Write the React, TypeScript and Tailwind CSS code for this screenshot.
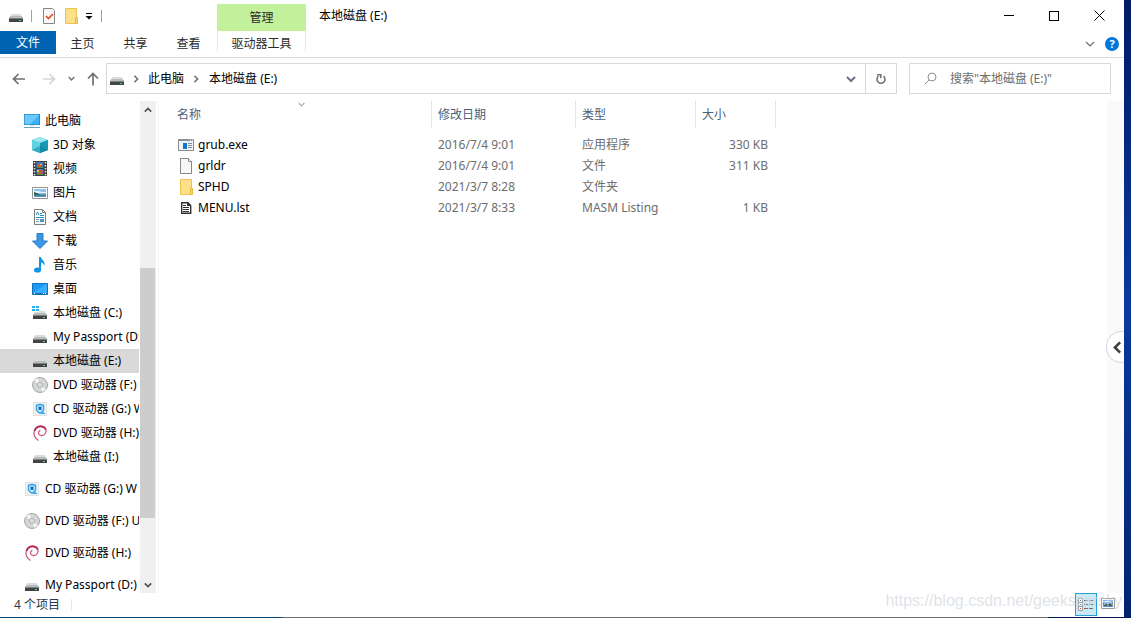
import { useState } from 'react'
import type { ReactNode } from 'react'

type IconName =
  | 'pc' | 'cube' | 'video' | 'picture' | 'doc' | 'download' | 'music' | 'desktop'
  | 'sysdrive' | 'drive' | 'disc' | 'cd' | 'debian' | 'exe' | 'file' | 'folder' | 'list'

// Shared by the plain drive and the system drive
const driveBody = (
  <>
    <path d="M3.500 6h9l2.500 4H1z" fill="#d9dbdc" />
    <path d="M2.500 8h11L15 10H1z" fill="#b9bcbe" />
    <path d="M1 10h14v1H1z" fill="#7b7f82" />
    <path d="M1 11h14v3H1z" fill="#414547" />
    <path d="M11 12h2v1h-2z" fill="#3ee53e" />
  </>
)

const icons: Record<IconName, ReactNode> = {
  pc: (
    <>
      <path d="M0 1h16v11H0z" fill="#1f7fc0" />
      <path d="M.7 1.700h14.600v9.600H.7z" fill="#3db1f5" />
      <path d="M.7 1.700h14.600L6 11.300H.7z" fill="#6cc9fb" />
      <path d="M6 12h4v1.500H6z" fill="#d5e2ea" />
      <path d="M0 14.500h16" stroke="#6fa0bf" />
    </>
  ),
  cube: (
    <>
      <path d="M0 3l8-3 8 3v10l-8 3-8-3z" fill="#31bcd2" />
      <path d="M0 3l8-3 8 3-8 3z" fill="#9ee6ef" />
      <path d="M0 3l8 3v10l-8-3z" fill="#5dd3e2" />
      <path d="M8 6l8-3v10l-8 3z" fill="#1798b4" />
      <path d="M8 9l8 4-8 3-8-3z" fill="#0f7f9c" opacity=".5" />
    </>
  ),
  video: (
    <>
      <path d="M1 0h14v15H1z" fill="#3b3b3b" />
      <path d="M2.500 1v14M13.500 1v14" stroke="#e8e8e8" strokeWidth="1.500" strokeDasharray="1.500 1.500" />
      <path d="M4.500 1h7v6h-7zM4.500 8h7v6h-7z" fill="#4778c4" />
      <path d="M5 5l3-3 2 2-1 2H5zM6 13l2-4 3 1-1 3z" fill="#d3582e" />
      <path d="M8 3h2v1H8zM5 9h2v2H5z" fill="#e9c83b" />
      <path d="M5 6h6v1H5zM5 13h6v1H5z" fill="#3f9441" />
    </>
  ),
  picture: (
    <>
      <path d="M.5 2.500h15v11H.5z" fill="#fff" stroke="#949494" />
      <path d="M2 4h12v8H2z" fill="#8cc3ee" />
      <path d="M2 6h5l3 1h4v1H2z" fill="#e3f1fb" />
      <path d="M2 7l3 1 3 1.500h6V11H2z" fill="#2d6a62" />
      <path d="M2 10.500h12V12H2z" fill="#5e97c6" />
    </>
  ),
  doc: (
    <>
      <path d="M2.500.5h8l3 3v12h-11z" fill="#fff" stroke="#7d7d7d" />
      <path d="M10.500.5v3h3" fill="none" stroke="#7d7d7d" />
      <path d="M4 6l1.500-3L7 6M8 4.500h2M8 6.500h4M4 8.500h8" fill="none" stroke="#1e8fd8" />
      <path d="M4 10.500h3M4 12.500h3" stroke="#8fa3b3" />
      <path d="M8 10h4v3H8z" fill="#4f93c4" />
    </>
  ),
  download: <path d="M5 .5h6V8h4.500L8 15.500.5 8H5z" fill="#3c97e3" stroke="#2a7ccb" />,
  music: (
    <>
      <path d="M7 0h2c.2 2.500 4.500 4 3.500 9-.5-2-1.500-3-3.500-3.500V13H7z" fill="#0f95e8" />
      <ellipse cx="5.500" cy="13" rx="3.500" ry="2.600" fill="#0f95e8" />
    </>
  ),
  desktop: (
    <>
      <path d="M.5 2.500h15v11H.5z" fill="#1a9bf5" stroke="#1272b8" />
      <path d="M1 12L14 3h1v9z" fill="#38aefc" />
      <path d="M1 12.500h14" stroke="#1272b8" />
      <path d="M2 12.500h1M11 12.500h1M13 12.500h1" stroke="#fff" />
    </>
  ),
  sysdrive: (
    <>
      {driveBody}
      <path d="M0 1h7v6H0z" fill="#fff" />
      <path d="M0 1h3v2H0zM4 1h3v2H4zM0 4h3v2H0zM4 4h3v2H4z" fill="#1fb1ee" />
    </>
  ),
  drive: driveBody,
  disc: (
    <>
      <circle cx="8" cy="8" r="7.500" fill="#d3d5d6" stroke="#a3a5a6" />
      <path d="M8 8L2 3.500A7 7 0 0 1 6 1.300zM8 8l6 4.500a7 7 0 0 1-4 2.200z" fill="#f2f3f3" />
      <circle cx="8" cy="8" r="2.500" fill="#e9eaea" stroke="#a9abac" />
      <circle cx="8" cy="8" r="1" fill="#fff" stroke="#b5b5b5" strokeWidth=".5" />
    </>
  ),
  cd: (
    <>
      <path d="M1.500 1.500h13v13h-13z" fill="#f0f0f0" stroke="#e4e4e4" />
      <path d="M4.500 4.500Q8 2.500 11.500 4.500V9Q10.500 11 8 12 5.500 11 4.500 9z" fill="#d8effc" stroke="#2ca3ee" strokeWidth="1.500" />
      <path d="M6.500 5.500h3v3.500h-3z" fill="#1b6fb8" />
      <path d="M9 12.500h4M11 10v3" stroke="#2ca3ee" strokeWidth="1.200" />
    </>
  ),
  debian: (
    <>
      <path
        d="M6.500 15.500C3.500 13.500 1.700 10.500 2 7.500 2.400 3.500 5.500 1.200 8.800 1.200c3.200 0 5.500 2.300 5.200 5.100-.3 2.600-2.300 4.200-4.500 4.200-2 0-3.200-1.300-3-2.900.1-1.200.9-2 1.900-2.300"
        fill="none" stroke="#c75b80" strokeWidth="1.300"
      />
      <path d="M2.500 6C3.500 3 6 1.300 8.800 1.300c2.400 0 4.300 1.300 5 3.200" fill="none" stroke="#b3224f" strokeWidth="1.800" />
    </>
  ),
  exe: (
    <>
      <path d="M.5 2.500h15v11H.5z" fill="#f1f3f4" stroke="#8c8c8c" />
      <path d="M0 2h16v2H0z" fill="#8c9296" />
      <path d="M12 3h1M14 3h1" stroke="#fff" />
      <path d="M5 6h4v6H5z" fill="#0a78d7" />
      <path d="M10 6.500h4M10 8.500h4M10 10.500h4" stroke="#8c8c8c" />
    </>
  ),
  file: (
    <>
      <path d="M2.500.5h8l3 3v12h-11z" fill="#f7f7f7" stroke="#868686" />
      <path d="M10.500.5v3h3" fill="#fff" stroke="#868686" />
    </>
  ),
  folder: (
    <>
      <path d="M2.500.5h11v15h-11z" fill="#ffe08a" stroke="#eec44f" />
      <path d="M12.500 9.500h2v6h-2z" fill="#ffdc70" stroke="#e6b93e" />
    </>
  ),
  list: (
    <>
      <path d="M3.700 2.700h6l3 3v7.600h-9z" fill="#fff" stroke="#303030" strokeWidth="1.400" />
      <path d="M9 2h1l3 3v1H9z" fill="#303030" />
      <path d="M5 5.500h3M5 7.500h6M5 9.500h6M5 11.500h6" stroke="#303030" />
    </>
  ),
}

function Icon({ name }: { name: IconName }) {
  return (
    <svg className="h-4 w-4 shrink-0" viewBox="0 0 16 16" aria-hidden="true">
      {icons[name]}
    </svg>
  )
}

interface ChevronProps {
  dir: 'up' | 'down' | 'left' | 'right'
  className?: string
  thin?: boolean
}

const chevronPaths = {
  up: 'M1 7l4-4 4 4',
  down: 'M1 3l4 4 4-4',
  left: 'M7 1L3 5l4 4',
  right: 'M3 1l4 4-4 4',
}

function Chevron({ dir, className = 'h-2 w-2', thin = false }: ChevronProps) {
  return (
    <svg className={className} viewBox="0 0 10 10" fill="none" stroke="currentColor" strokeWidth={thin ? 1.2 : 2} aria-hidden="true">
      <path d={chevronPaths[dir]} />
    </svg>
  )
}

interface TreeItem {
  id: string
  label: string
  icon: IconName
  root?: boolean
}

const tree: TreeItem[] = [
  { id: '3d', label: '3D 对象', icon: 'cube' },
  { id: 'video', label: '视频', icon: 'video' },
  { id: 'pictures', label: '图片', icon: 'picture' },
  { id: 'docs', label: '文档', icon: 'doc' },
  { id: 'downloads', label: '下载', icon: 'download' },
  { id: 'music', label: '音乐', icon: 'music' },
  { id: 'desktop', label: '桌面', icon: 'desktop' },
  { id: 'c', label: '本地磁盘 (C:)', icon: 'sysdrive' },
  { id: 'd', label: 'My Passport (D:)', icon: 'drive' },
  { id: 'e', label: '本地磁盘 (E:)', icon: 'drive' },
  { id: 'f', label: 'DVD 驱动器 (F:)', icon: 'disc' },
  { id: 'g', label: 'CD 驱动器 (G:) W', icon: 'cd' },
  { id: 'h', label: 'DVD 驱动器 (H:)', icon: 'debian' },
  { id: 'i', label: '本地磁盘 (I:)', icon: 'drive' },
  { id: 'root-g', label: 'CD 驱动器 (G:) W', icon: 'cd', root: true },
  { id: 'root-f', label: 'DVD 驱动器 (F:) U', icon: 'disc', root: true },
  { id: 'root-h', label: 'DVD 驱动器 (H:)', icon: 'debian', root: true },
  { id: 'root-d', label: 'My Passport (D:)', icon: 'drive', root: true },
]

const files: { name: string; date: string; type: string; size: string; icon: IconName }[] = [
  { name: 'grub.exe', date: '2016/7/4 9:01', type: '应用程序', size: '330 KB', icon: 'exe' },
  { name: 'grldr', date: '2016/7/4 9:01', type: '文件', size: '311 KB', icon: 'file' },
  { name: 'SPHD', date: '2021/3/7 8:28', type: '文件夹', size: '', icon: 'folder' },
  { name: 'MENU.lst', date: '2021/3/7 8:33', type: 'MASM Listing', size: '1 KB', icon: 'list' },
]

function TitleBar() {
  return (
    <header className="flex h-[31px] shrink-0">
      <div className="flex w-[217px] items-center pl-2">
        <Icon name="drive" />
        <span className="ml-[7px] h-3 w-px bg-gray-400" />
        <button type="button" aria-label="属性" className="ml-[9px]">
          <svg className="h-4 w-4" viewBox="0 0 16 16" aria-hidden="true">
            <path d="M2.500.5h9l2 2v13h-11z" fill="#f8f8f8" stroke="#868686" />
            <path d="M5 8l2.500 2.500L12 6" fill="none" stroke="#e8501e" strokeWidth="1.700" />
          </svg>
        </button>
        <button type="button" aria-label="新建文件夹" className="ml-[6px]">
          <Icon name="folder" />
        </button>
        <button type="button" aria-label="自定义快速访问工具栏" className="ml-[6px]">
          <svg className="h-2 w-2" viewBox="0 0 8 8" aria-hidden="true">
            <path d="M1 1.500h6" stroke="#000" />
            <path d="M.5 4h7L4 7.500z" fill="#000" />
          </svg>
        </button>
        <span className="ml-2 h-3 w-px bg-gray-400" />
      </div>
      <div className="flex h-[27px] w-[89px] items-center justify-center self-end bg-[#c3f09b]">管理</div>
      <h1 className="flex-1 self-center pl-[13px] text-black">本地磁盘 (E:)</h1>
      <div className="flex pr-px text-black">
        <button type="button" aria-label="最小化" className="flex w-[45px] items-center justify-center">
          <span className="h-px w-[10px] bg-black" />
        </button>
        <button type="button" aria-label="最大化" className="flex w-[45px] items-center justify-center">
          <span className="h-[10px] w-[10px] border border-black" />
        </button>
        <button type="button" aria-label="关闭" className="flex w-[47px] items-center justify-center">
          <svg className="h-[11px] w-[11px]" viewBox="0 0 11 11" stroke="#000" aria-hidden="true">
            <path d="M.5.5l10 10M10.500.5l-10 10" />
          </svg>
        </button>
      </div>
    </header>
  )
}

function Ribbon() {
  return (
    <nav className="flex h-[27px] shrink-0 border-b border-[#dadbdc]">
      <button type="button" className="h-[23px] w-14 bg-[#0063b1] text-white">文件</button>
      {['主页', '共享', '查看'].map((tab) => (
        <button key={tab} type="button" className="h-[26px] w-[53px]">{tab}</button>
      ))}
      <div className="ml-[2px] h-5 border-x border-gray-200">
        <button type="button" className="h-[26px] w-[87px]">驱动器工具</button>
      </div>
      <div className="flex flex-1 items-center justify-end gap-[10px] pr-[5px]">
        <button type="button" aria-label="展开功能区" className="text-gray-500">
          <Chevron dir="down" thin className="h-[10px] w-[10px]" />
        </button>
        <button type="button" aria-label="帮助" className="h-[14px] w-[14px] rounded-full bg-[#0078d7] text-[11px] leading-[14px] font-bold text-white">
          ?
        </button>
      </div>
    </nav>
  )
}

function AddressBar() {
  return (
    <div className="flex shrink-0 items-center pt-[5px] pr-[13px] pb-[7px]">
      <div className="flex w-[106px] items-center pl-3 text-[#707070]">
        <button type="button" aria-label="后退">
          <svg className="h-[14px] w-[14px]" viewBox="0 0 14 14" fill="none" stroke="currentColor" strokeWidth="1.700" aria-hidden="true">
            <path d="M13 7H1.500M6.500 2l-5 5 5 5" />
          </svg>
        </button>
        <button type="button" aria-label="前进" className="ml-4 text-gray-300">
          <svg className="h-[14px] w-[14px]" viewBox="0 0 14 14" fill="none" stroke="currentColor" strokeWidth="1.700" aria-hidden="true">
            <path d="M1 7h11.500M7.500 2l5 5-5 5" />
          </svg>
        </button>
        <button type="button" aria-label="最近浏览的位置" className="ml-3">
          <Chevron dir="down" className="h-[7px] w-[7px]" />
        </button>
        <button type="button" aria-label="上移" className="ml-[11px]">
          <svg className="h-[14px] w-[14px]" viewBox="0 0 14 14" fill="none" stroke="currentColor" strokeWidth="1.700" aria-hidden="true">
            <path d="M7 13.500V1.500M2 6.500l5-5 5 5" />
          </svg>
        </button>
      </div>
      <div className="flex h-[31px] flex-1 items-center border border-[#d9d9d9] text-black">
        <span className="ml-[2px]">
          <Icon name="drive" />
        </span>
        <span className="ml-[7px] text-gray-500"><Chevron dir="right" /></span>
        <button type="button" className="ml-2">此电脑</button>
        <span className="ml-2 text-gray-500"><Chevron dir="right" /></span>
        <button type="button" className="ml-[9px]">本地磁盘 (E:)</button>
        <button type="button" aria-label="以前的位置" className="ml-auto flex h-full w-[29px] items-center justify-center text-gray-500">
          <Chevron dir="down" className="h-[10px] w-[10px]" />
        </button>
        <button type="button" aria-label="刷新" className="flex h-full w-[31px] items-center justify-center border-l border-[#d9d9d9] text-[#707070]">
          <svg className="h-3 w-3" viewBox="0 0 12 12" fill="none" stroke="currentColor" strokeWidth="1.500" aria-hidden="true">
            <path d="M3.500 3.200A4 4 0 1 0 8.500 3.200" />
            <path d="M2 1.700h3.800v3.600" />
          </svg>
        </button>
      </div>
      <label className="ml-3 flex h-[31px] w-[202px] items-center border border-[#d9d9d9] pl-[14px]">
        <svg className="h-[13px] w-[13px] shrink-0" viewBox="0 0 13 13" fill="none" stroke="#8a9097" aria-hidden="true">
          <circle cx="8" cy="5" r="4" />
          <path d="M5 8L.7 12.300" />
        </svg>
        <input
          type="search"
          aria-label="搜索"
          placeholder={'搜索"本地磁盘 (E:)"'}
          className="ml-[13px] w-full min-w-0 bg-transparent outline-none placeholder:text-[#6d6d6d]"
        />
      </label>
    </div>
  )
}

function Sidebar() {
  const [selected, setSelected] = useState('e')

  return (
    <aside className="flex w-[156px] shrink-0 text-black">
      <ul className="mr-px min-w-0 flex-1 overflow-hidden pt-2">
        <li>
          <button type="button" className="flex h-6 w-full items-center gap-[5px] pl-6">
            <Icon name="pc" />
            此电脑
          </button>
        </li>
        {tree.map((item) => (
          <li key={item.id} className={item.root ? 'mt-2' : ''}>
            <button
              type="button"
              onClick={() => setSelected(item.id)}
              className={`flex h-6 w-full items-center gap-[5px] overflow-hidden whitespace-nowrap ${
                item.root ? 'pl-6' : 'pl-8'
              } ${selected === item.id ? 'bg-[#d9d9d9]' : ''}`}
            >
              <Icon name={item.icon} />
              {item.label}
            </button>
          </li>
        ))}
      </ul>
      <div className="flex w-4 flex-col bg-[#f0f0f0] text-[#505050]">
        <button type="button" aria-label="向上滚动" className="flex h-[17px] items-center justify-center">
          <Chevron dir="up" />
        </button>
        <div className="flex-[150]" />
        <div className="mr-px flex-[250] bg-[#cdcdcd]" />
        <div className="flex-[58]" />
        <button type="button" aria-label="向下滚动" className="flex h-[17px] items-center justify-center">
          <Chevron dir="down" />
        </button>
      </div>
    </aside>
  )
}

function FileTable() {
  return (
    <table className="w-[605px] table-fixed self-start text-left text-[#6d6d6d]">
      <colgroup>
        <col className="w-[261px]" />
        <col className="w-[144px]" />
        <col className="w-[120px]" />
        <col className="w-[80px]" />
      </colgroup>
      <thead className="text-[#4c607a]">
        <tr>
          {['名称', '修改日期', '类型', '大小'].map((title, i) => (
            <th key={title} className="relative p-0 pb-[6px] font-normal">
              {i === 0 && (
                <span className="absolute inset-x-0 top-0 flex justify-center text-gray-600">
                  <Chevron dir="down" thin className="h-[7px] w-[7px]" />
                </span>
              )}
              <div className="flex h-[27px] items-center border-r border-[#e5e5e5] pl-[6px]">{title}</div>
            </th>
          ))}
        </tr>
      </thead>
      <tbody>
        {files.map((file) => (
          <tr key={file.name} className="h-[21px]">
            <td className="p-0">
              <div className="flex items-center gap-1 pl-[7px] text-black">
                <Icon name={file.icon} />
                {file.name}
              </div>
            </td>
            <td className="p-0 pl-[6px]">{file.date}</td>
            <td className="p-0 pl-[6px]">{file.type}</td>
            <td className="p-0 pr-2 text-right">{file.size}</td>
          </tr>
        ))}
      </tbody>
    </table>
  )
}

function StatusBar() {
  return (
    <footer className="relative flex h-6 shrink-0 items-center pr-[9px] pl-[14px] text-[#26374f]">
      <span>4 个项目</span>
      <span className="ml-[11px] h-3 w-px bg-gray-200" />
      <div className="ml-auto flex h-full items-start gap-1">
        <button type="button" aria-label="详细信息" className="flex h-[23px] w-[22px] items-center justify-center border border-[#26a0da] bg-[#cbe8f6]">
          <svg className="h-4 w-4" viewBox="0 0 16 16" fill="none" aria-hidden="true">
            <path d="M.5 1.500h4v4h-4zM.5 5.500h4v4h-4zM.5 9.500h4v4h-4z" fill="#fff" stroke="#9a9a9a" />
            <path d="M2 3h1v1H2z" fill="#3a78c3" />
            <path d="M2 7h1v1H2z" fill="#3a78c3" />
            <path d="M2 11h1v1H2z" fill="#d33" />
            <path d="M6 3.500h10M6 7.500h10M6 11.500h10" stroke="#707070" strokeDasharray="4 1" />
          </svg>
        </button>
        <button type="button" aria-label="大缩略图" className="flex h-[21px] items-center">
          <svg className="h-[14px] w-[14px]" viewBox="0 0 14 14" aria-hidden="true">
            <path d="M.5 1.500h13v10H.5z" fill="#fff" stroke="#9a9a9a" />
            <path d="M2 3h10v7H2z" fill="#7db7ee" />
            <path d="M4 4h4v1H4z" fill="#fff" />
            <path d="M2 6l4 1 6-1v3H2z" fill="#2f5f5a" />
            <path d="M2 9h10v1H2z" fill="#5a90c8" />
          </svg>
        </button>
      </div>
      <span className="pointer-events-none absolute right-[2px] bottom-1 font-['Liberation_Sans'] text-base text-gray-300/70">
        https://blog.csdn.net/geekscarsky
      </span>
    </footer>
  )
}

export default function App() {
  return (
    <div className="flex h-screen flex-col bg-[#0a2f8f] font-['Noto_Sans','Noto_Sans_CJK_SC',sans-serif] text-[12px] leading-4 text-[#2b2b2b]">
      <div className="flex min-h-0 flex-1 bg-linear-to-b from-[#021b66] via-[#0a3a9e] to-[#03246f] pr-[7px]">
        <div className="flex min-w-0 flex-1 flex-col overflow-hidden bg-white">
          <TitleBar />
          <Ribbon />
          <AddressBar />
          <main className="relative flex min-h-0 flex-1">
            <Sidebar />
            <div className="ml-[2px] flex min-w-0 flex-1 border-l border-gray-100 pl-3">
              <FileTable />
            </div>
            <div className="w-[17px] bg-[#fafafa]" />
            <button
              type="button"
              aria-label="展开侧边栏"
              className="absolute top-[230px] -right-3 flex h-8 w-[30px] items-center rounded-full border border-[#ccd6e8] bg-white pl-1 text-[#404040]"
            >
              <Chevron dir="left" className="h-[13px] w-[13px]" />
            </button>
          </main>
          <StatusBar />
        </div>
      </div>
      {/* Desktop edge below the window */}
      <div className="flex h-px shrink-0">
        <div className="w-1/4 bg-[#0c4a78]" />
        <div className="flex-1 bg-[#6f6f6f]" />
        <div className="w-[83px] bg-[#021b50]" />
      </div>
    </div>
  )
}
